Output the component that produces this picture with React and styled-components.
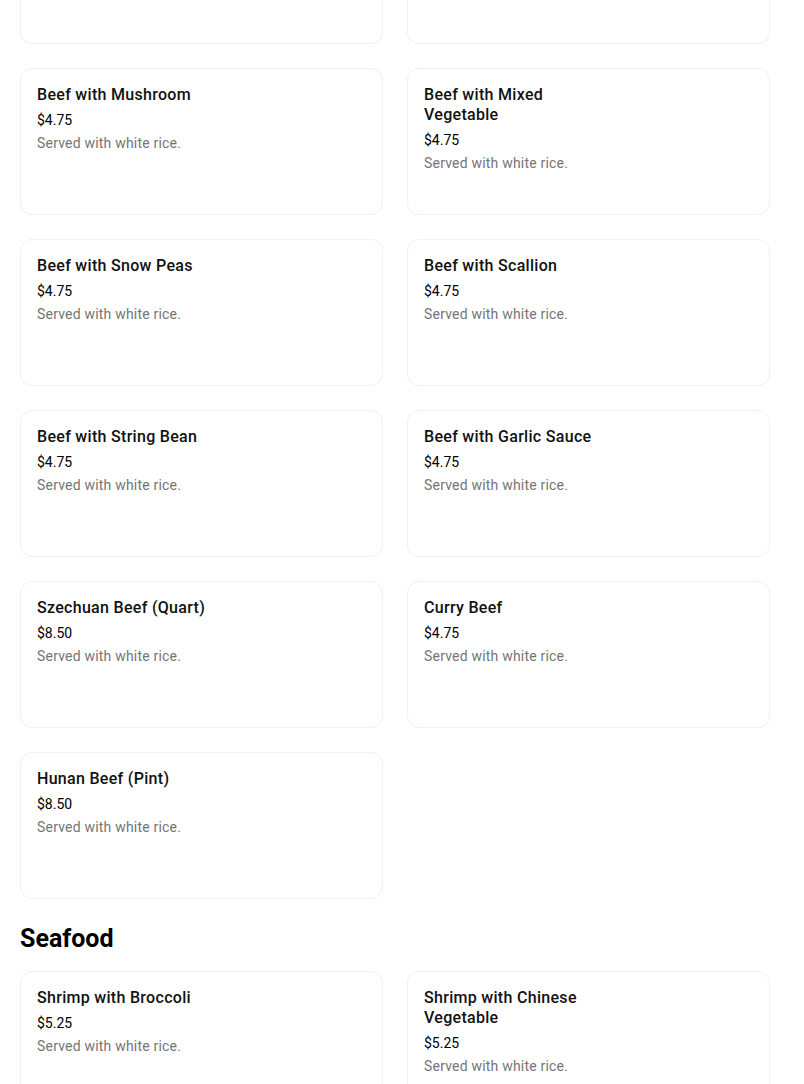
import React from 'react'
import styled, { createGlobalStyle } from 'styled-components'

const GlobalStyle = createGlobalStyle`
  html, body {
    margin: 0;
    padding: 0;
    background: #ffffff;
    font-family: Roboto, "Liberation Sans", sans-serif;
    color: #000000;
  }
`

const Page = styled.div`
  width: 750px;
  padding: 0 20px;
  display: flex;
  flex-direction: column;
`

const Section = styled.section`
  display: flex;
  flex-direction: column;
`

const SectionTitle = styled.h2`
  margin: 26px 0 18px;
  font-size: 25px;
  line-height: 28px;
  font-weight: 700;
`

const Grid = styled.div`
  display: grid;
  grid-template-columns: 1fr 1fr;
  gap: 24px;
`

/* bottom of the row scrolled above the viewport */
const CardTail = styled.div`
  box-sizing: border-box;
  height: 44px;
  border: 1px solid #f1f1f1;
  border-top: none;
  border-radius: 0 0 12px 12px;
  background: #fff;
`

const Card = styled.div`
  box-sizing: border-box;
  height: 147px;
  border: 1px solid #f1f1f1;
  border-radius: 12px;
  background: #fff;
  padding: 16px;
  display: flex;
`

const Info = styled.div`
  width: 192px;
  display: flex;
  flex-direction: column;
`

const Name = styled.div`
  font-size: 16px;
  line-height: 20px;
  font-weight: 500;
  letter-spacing: 0.3px;
  color: #111;
`

const Price = styled.div`
  margin-top: 5px;
  font-size: 14px;
  line-height: 20px;
  color: #000;
`

const Desc = styled.div`
  margin-top: 3px;
  font-size: 14px;
  line-height: 20px;
  letter-spacing: 0.2px;
  color: #757575;
`

const beef = [
  { name: 'Beef with Mushroom', price: '$4.75' },
  { name: 'Beef with Mixed Vegetable', price: '$4.75' },
  { name: 'Beef with Snow Peas', price: '$4.75' },
  { name: 'Beef with Scallion', price: '$4.75' },
  { name: 'Beef with String Bean', price: '$4.75' },
  { name: 'Beef with Garlic Sauce', price: '$4.75' },
  { name: 'Szechuan Beef (Quart)', price: '$8.50' },
  { name: 'Curry Beef', price: '$4.75' },
  { name: 'Hunan Beef (Pint)', price: '$8.50' },
]

const seafood = [
  { name: 'Shrimp with Broccoli', price: '$5.25' },
  { name: 'Shrimp with Chinese Vegetable', price: '$5.25' },
]

const MenuItem = ({ item }) => (
  <Card>
    <Info>
      <Name>{item.name}</Name>
      <Price>{item.price}</Price>
      <Desc>Served with white rice.</Desc>
    </Info>
  </Card>
)

export default function App() {
  return (
    <>
      <GlobalStyle />
      <Page>
        <Section>
          <Grid>
            <CardTail />
            <CardTail />
            {beef.map((item) => (
              <MenuItem key={item.name} item={item} />
            ))}
          </Grid>
        </Section>
        <Section>
          <SectionTitle>Seafood</SectionTitle>
          <Grid>
            {seafood.map((item) => (
              <MenuItem key={item.name} item={item} />
            ))}
          </Grid>
        </Section>
      </Page>
    </>
  )
}
